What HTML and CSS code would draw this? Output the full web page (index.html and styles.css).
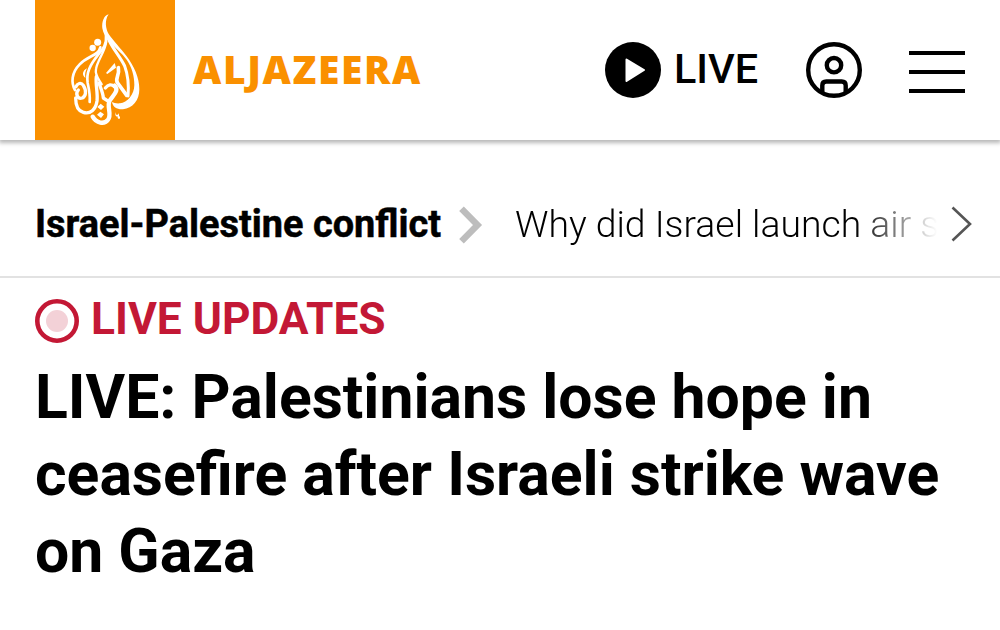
FILE: index.html
```html
<!DOCTYPE html>
<html lang="en">
<head>
<meta charset="utf-8">
<title>Al Jazeera</title>
<link rel="stylesheet" href="styles.css">
</head>
<body>
<header class="header">
  <a class="brand">
    <svg class="brand-mark" viewBox="15 0 420 420" aria-label="Al Jazeera logo">
      <g fill="#fff">
        <path d="M236 43C221 47 215 66 217 85C219 98 226 113 238 125C256 143 276 160 290 179C306 202 313 229 313 255C313 284 292 308 270 310C260 311 251 309 246 306C249 321 260 329 279 328C308 325 328 302 328 268C328 232 312 199 290 169C272 145 249 121 236 102C227 87 223 61 236 43Z"/>
        <circle cx="203" cy="127" r="10.5"/><circle cx="188" cy="144" r="9.5"/>
        <path d="M254 189L258 203L232 222L228 219Z"/>
        <path d="M212 311L223 320L213 330L202 321ZM211 335L222 343L213 354L201 344Z"/>
        <path d="M171 205C157 212 155 226 166 234C164 220 167 213 171 205ZM257 335C254 345 258 352 263 349C261 357 271 361 270 351C265 348 268 343 266 340C262 349 256 344 257 335Z"/>
      </g>
      <g fill="none" stroke="#fff" stroke-linecap="round" stroke-linejoin="round">
        <path stroke-width="8" d="M211 142C205 168 175 166 149 193C124 218 123 249 135 270"/>
        <path stroke-width="10" d="M138 260C142 250 153 246 160 256C171 274 167 288 157 294C143 299 135 281 145 270"/>
        <path stroke-width="10" d="M137 294C137 315 141 332 160 337C181 343 197 329 201 303C204 278 196 254 199 230"/>
        <path stroke-width="8" d="M228 106C231 136 216 150 203 166C181 194 168 217 173 249C177 267 181 286 179 306"/>
        <path stroke-width="7" d="M229 125C224 158 202 181 198 207C194 226 207 238 215 253"/>
        <path stroke-width="9" d="M232 108C240 137 270 168 284 198C294 225 297 254 294 288"/>
        <path stroke-width="11" d="M265 203C270 225 253 238 263 249L290 286"/>
        <path stroke-width="13" d="M254 257C268 271 251 284 239 302C229 318 247 345 234 359C223 374 199 370 188 350"/>
        <path stroke-width="10" d="M207 249C212 265 219 278 220 294L232 302M226 264C235 252 245 252 253 260"/>
      </g>
    </svg>
    <span class="brand-name">ALJAZEERA</span>
  </a>
  <nav class="actions">
    <a class="live-link">
      <svg class="round-icon" viewBox="0 0 56 56"><circle cx="28" cy="28" r="28"/><path d="M21.5 17.5L39 28L21.5 39Z" fill="#fff" stroke="#fff" stroke-width="2" stroke-linejoin="round"/></svg>
      <span class="live-label">LIVE</span>
    </a>
    <svg class="round-icon" viewBox="0 0 56 56" fill="none" stroke="#000" stroke-width="4.4"><circle cx="28" cy="28" r="25.8"/><circle cx="28" cy="23.2" r="7.2"/><path d="M16.3 50V43.5Q16.3 39.5 20.3 39.5H35.7Q39.7 39.5 39.7 43.5V50"/></svg>
    <span class="menu"><i class="bar"></i><i class="bar"></i><i class="bar"></i></span>
  </nav>
</header>
<nav class="topics">
  <strong class="topic">Israel-Palestine conflict</strong>
  <svg class="separator" viewBox="0 0 24 38" fill="none" stroke="#bdbdbd" stroke-width="6.5"><path d="M2.5 2.8L18.5 19L2.5 35.2"/></svg>
  <span class="story">Why did Israel launch air s</span>
  <svg class="next" viewBox="0 0 24 38" fill="none" stroke="#555" stroke-width="2.6"><path d="M2.5 2.5L20 19L2.5 35.5"/></svg>
</nav>
<main class="article">
  <div class="updates">
    <svg class="pulse" viewBox="0 0 44 44"><circle cx="22" cy="22" r="19.7" fill="#fff" stroke="#c31835" stroke-width="4.6"/><circle cx="22" cy="22" r="11" fill="#f3d1d7"/></svg>
    <span class="updates-label">LIVE UPDATES</span>
  </div>
  <h1 class="headline">LIVE: Palestinians lose hope in<br>ceasefire after Israeli strike wave<br>on Gaza</h1>
</main>
</body>
</html>
```

FILE: styles.css
```css
* { box-sizing: border-box; }
body { margin: 0; background: #fff; color: #000; font-family: Roboto, "Liberation Sans", sans-serif; overflow: hidden; }
svg { display: block; flex: none; }
.header { display: flex; justify-content: space-between; height: 140px; padding: 0 35px; box-shadow: 0 2px 4px 1px rgba(0,0,0,.28); }
.brand { display: flex; }
.brand-mark { width: 140px; height: 140px; background: #fa9000; }
.brand-name { margin: 42px 0 0 18px; color: #fa9000; font: 800 39px/54px "Open Sans", "Noto Sans", sans-serif; letter-spacing: 1.6px; white-space: nowrap; }
.actions { display: flex; align-items: center; }
.live-link { display: flex; align-items: center; width: 201px; gap: 13px; }
.round-icon { width: 56px; height: 56px; }
.live-label { font-size: 41.4px; font-weight: 500; line-height: 54px; margin-top: -2px; }
.menu { display: flex; flex-direction: column; gap: 15px; width: 56px; margin: 4px 0 0 47px; }
.bar { height: 4px; background: #000; }
.topics { display: flex; align-items: center; height: 138px; padding: 31px 26px 0 35px; border-bottom: 2px solid #e2e2e2; white-space: nowrap; }
.topic { width: 424px; font-size: 37.9px; line-height: 50px; -webkit-text-stroke: .5px #000; }
.separator { width: 24px; height: 38px; margin-top: 2px; }
.story { width: 425px; margin-left: 32px; font-size: 37.3px; font-weight: 300; line-height: 50px; -webkit-mask-image: linear-gradient(90deg, #000 340px, transparent 422px); mask-image: linear-gradient(90deg, #000 340px, transparent 422px); }
.next { width: 24px; height: 38px; margin-left: 10px; }
.article { padding: 17px 35px 0; }
.updates { display: flex; align-items: center; gap: 12px; height: 52px; color: #c31835; }
.pulse { width: 44px; height: 44px; }
.updates-label { font-size: 44.3px; font-weight: 700; line-height: 52px; margin-top: -4px; }
.headline { margin: 12px 0 0; font-size: 60.7px; font-weight: 700; line-height: 77px; white-space: nowrap; }
```
